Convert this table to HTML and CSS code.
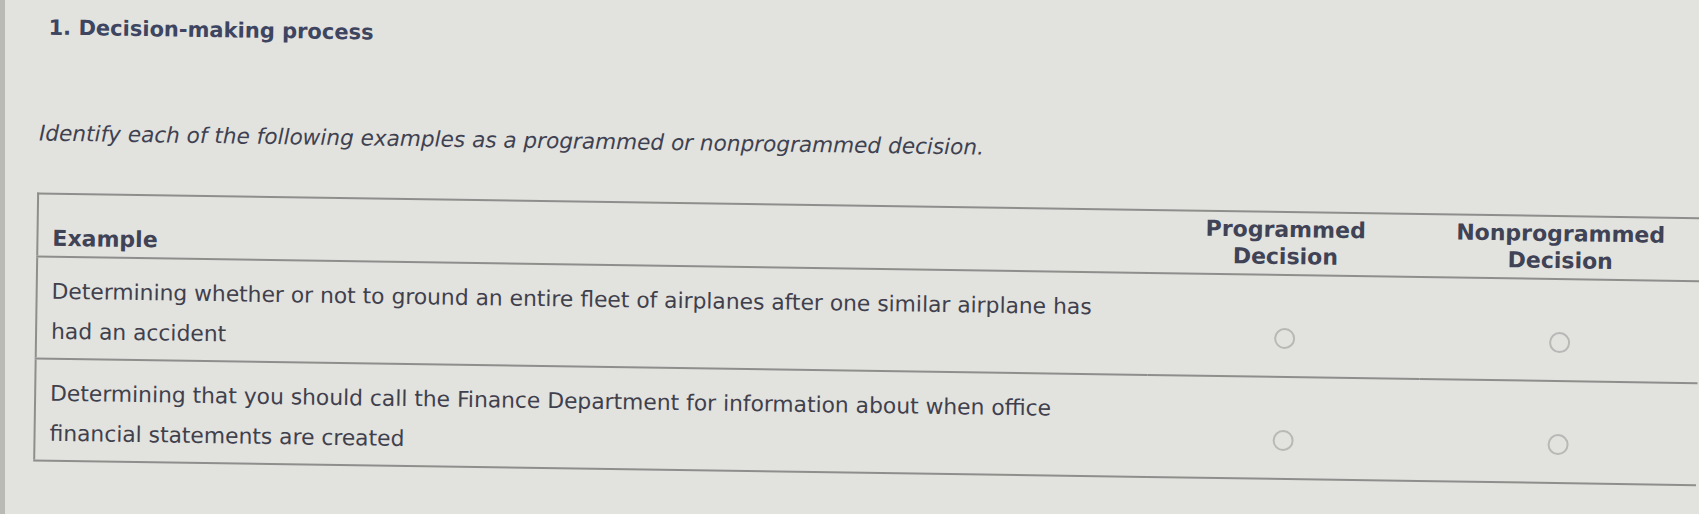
FILE: index.html
```html
<!DOCTYPE html>
<html lang="en">
<head>
<meta charset="utf-8">
<title>Decision-making process</title>
<link rel="stylesheet" href="styles.css">
</head>
<body>
<main class="page">
  <h1 class="title">1. Decision-making process</h1>
  <p class="prompt">Identify each of the following examples as a programmed or nonprogrammed decision.</p>
  <table class="grid">
    <colgroup>
      <col class="c-example">
      <col class="c-prog">
      <col class="c-nonprog">
    </colgroup>
    <thead>
      <tr>
        <th class="col-example">Example</th>
        <th class="col-choice">Programmed<br>Decision</th>
        <th class="col-choice">Nonprogrammed<br>Decision</th>
      </tr>
    </thead>
    <tbody>
      <tr>
        <td class="cell-text">Determining whether or not to ground an entire fleet of airplanes after one similar airplane has had an accident</td>
        <td class="cell-radio"><span class="radio"></span></td>
        <td class="cell-radio"><span class="radio"></span></td>
      </tr>
      <tr>
        <td class="cell-text">Determining that you should call the Finance Department for information about when office financial statements are created</td>
        <td class="cell-radio"><span class="radio"></span></td>
        <td class="cell-radio"><span class="radio"></span></td>
      </tr>
    </tbody>
  </table>
</main>
</body>
</html>
```
FILE: styles.css
```css
html, body {
  margin: 0;
  padding: 0;
  background: #e2e2df;
  overflow: hidden;
}

body {
  width: 1699px;
  height: 514px;
  border-left: 5px solid #b9b9b6;
  box-sizing: border-box;
  font-family: "DejaVu Sans", Verdana, sans-serif;
}

.page {
  padding: 12px 0 0 44px;
  transform: rotate(0.85deg);
  transform-origin: 0 0;
}

.title {
  margin: 0;
  font-size: 21px;
  font-weight: bold;
  line-height: 30px;
  color: #3d4560;
}

.prompt {
  margin: 76px 0 0 -8px;
  font-size: 21.6px;
  font-style: italic;
  line-height: 30px;
  color: #3e4150;
}

.grid {
  margin: 44px 0 0 -9px;
  width: 1662px;
  table-layout: fixed;
  border-collapse: collapse;
  border-left: 2px solid #8e8e8c;
  border-top: 2px solid #8e8e8c;
  color: #3f404c;
}

.c-example { width: 1112px; }
.c-prog { width: 272px; }
.c-nonprog { width: 278px; }

.grid th {
  font-size: 22px;
  font-weight: bold;
  line-height: 27px;
  padding: 3px 14px 4px;
  vertical-align: bottom;
  color: #3f4355;
  border-bottom: 2px solid #8e8e8c;
}

.col-example {
  text-align: left;
}

.col-choice {
  text-align: center;
  white-space: nowrap;
}

.grid td {
  border-bottom: 2px solid #8e8e8c;
}

.cell-text {
  font-size: 21.8px;
  line-height: 40px;
  padding: 14px 20px 6px 14px;
  vertical-align: top;
}

.cell-radio {
  text-align: center;
  vertical-align: bottom;
  padding: 0 0 27px;
}

.radio {
  display: inline-block;
  width: 17px;
  height: 17px;
  border: 2px solid #b8b8b6;
  border-radius: 50%;
  vertical-align: middle;
}
```
